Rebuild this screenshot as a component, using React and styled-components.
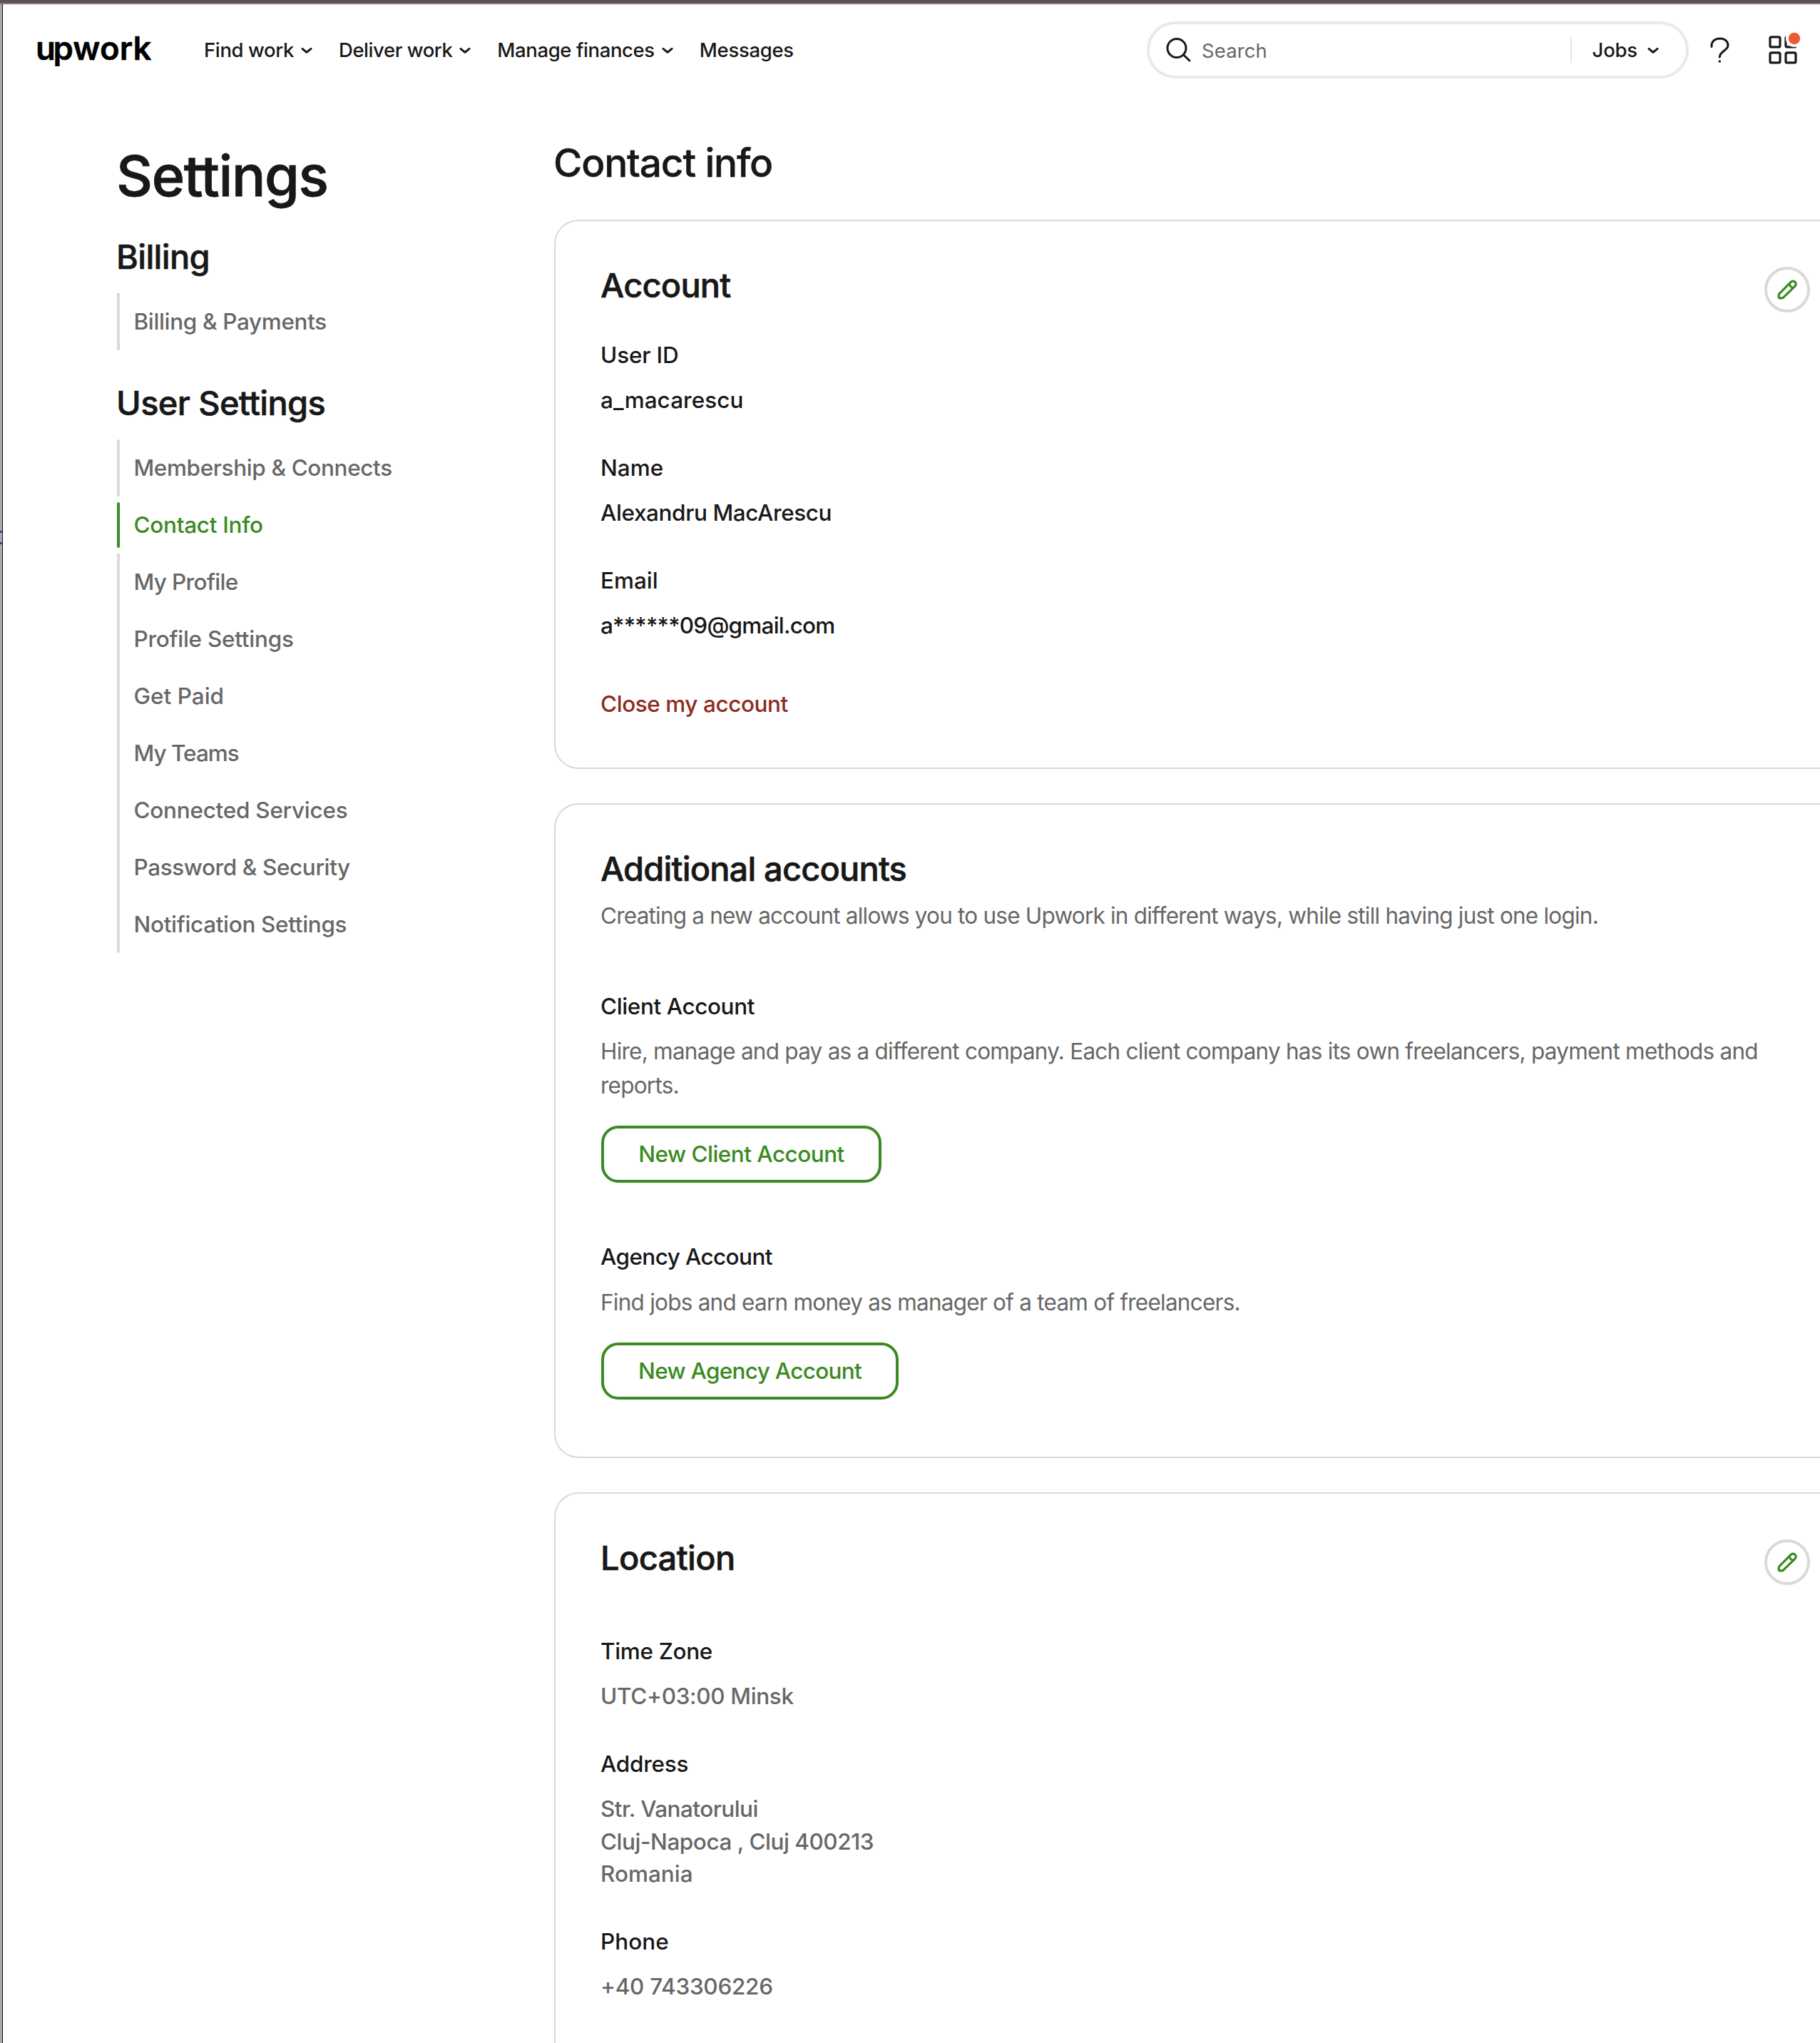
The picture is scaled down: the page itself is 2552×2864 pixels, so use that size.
import React from 'react';
import styled, { createGlobalStyle, css } from 'styled-components';

const ink = '#181818';
const muted = '#676767';
const green = '#3b8a22';
const line = '#d9d9d9';

const GlobalStyle = createGlobalStyle`
  *, *::before, *::after { box-sizing: border-box; }
  body { margin: 0; background: #fff; }
`;

/* ---------- Window frame ---------- */

const Window = styled.div`
  display: flex;
  flex-direction: column;
  height: 2864px;
  overflow: hidden;
  background: #fff;
  color: ${ink};
  font-family: Inter, 'Liberation Sans', sans-serif;
  font-weight: 500;
  font-size: 31.5px;
  -webkit-font-smoothing: antialiased;
`;

const WindowTop = styled.div`
  flex: none;
  height: 6px;
  background: #5e505a;
  border-bottom: 2px solid #84767f;
`;

const WindowBody = styled.div`
  flex: 1;
  display: flex;
  min-height: 0;
`;

const WindowEdge = styled.div`
  flex: none;
  width: 4px;
  padding-top: 738px;
  background: #a9a9a9;
  border-right: 1px solid #0c0c0c;
`;

const EdgeMark = styled.div`
  height: 3px;
  margin-bottom: 13px;
  background: #3f3fa3;
`;

const Page = styled.div`
  flex: 1;
  min-width: 0;
  overflow: hidden;
`;

/* ---------- Top navigation ---------- */

const Header = styled.header`
  display: flex;
  align-items: center;
  height: 128px;
  padding: 0 20px 0 46px;
`;

const Logo = styled.div`
  width: 236px;
  color: #000;
  font-size: 45.5px;
  font-weight: 600;
  line-height: 60px;
  letter-spacing: 0.1px;
  padding-bottom: 5px;
  -webkit-text-stroke: 0.5px #000;
`;

const LogoJoin = styled.span`
  letter-spacing: -3.4px;
`;

const Nav = styled.nav`
  display: flex;
  align-items: center;
  gap: 37px;
`;

const NavItem = styled.a`
  display: flex;
  align-items: center;
  gap: 10px;
  font-size: 27.5px;
  line-height: 40px;
  white-space: nowrap;
  letter-spacing: ${(p) => p.$track}px;
`;

const Search = styled.div`
  display: flex;
  align-items: center;
  width: 760px;
  height: 80px;
  margin-left: auto;
  padding: 0 38px 0 22px;
  border: 4px solid #e9e9e9;
  border-radius: 40px;
`;

const SearchLabel = styled.span`
  flex: 1;
  padding: 1px 0 0 11px;
  font-size: 27.5px;
  font-weight: 400;
  line-height: 40px;
  letter-spacing: 0.1px;
  color: ${muted};
`;

const SearchScope = styled.div`
  display: flex;
  align-items: center;
  gap: 14px;
  height: 36px;
  padding-left: 29px;
  border-left: 2px solid #e4e4e4;
  font-size: 27.5px;
  letter-spacing: -0.2px;
`;

const HeaderIcon = styled.svg`
  flex: none;
  margin-left: ${(p) => p.$gap}px;
`;

const Chevron = () => (
  <svg width="16" height="16" viewBox="0 0 16 16" fill="none">
    <path d="M2 6.3 8 11.300l6-5" stroke={ink} strokeWidth="3" strokeLinecap="round" strokeLinejoin="round" />
  </svg>
);

const SearchIcon = () => (
  <svg width="40" height="40" viewBox="0 0 40 40" fill="none" stroke={ink} strokeWidth="3" strokeLinecap="round">
    <circle cx="16" cy="17.5" r="13" />
    <path d="M25.6 27 34 35" />
  </svg>
);

const HelpIcon = () => (
  <HeaderIcon $gap={28} width="32" height="48" viewBox="0 0 32 48" fill="none">
    <path
      d="M4 19.5v-1.3C4 11.8 9 8 15.8 8 22.5 8 27 11.800 27 17.300 27 25.500 15.500 25 15.300 34"
      stroke={ink}
      strokeWidth="3"
      strokeLinecap="round"
    />
    <circle cx="15.300" cy="40" r="1.800" fill={ink} />
  </HeaderIcon>
);

const AppsIcon = () => (
  <HeaderIcon $gap={48} width="56" height="56" viewBox="0 0 56 56" fill="none">
    <g stroke={ink} strokeWidth="3.2">
      <rect x="6" y="9.900" width="14" height="14" rx="2" />
      <rect x="28" y="9.900" width="14" height="14" rx="2" />
      <rect x="6" y="31.900" width="14" height="14" rx="2" />
      <rect x="28" y="31.900" width="14" height="14" rx="2" />
    </g>
    <circle cx="40" cy="12" r="12" fill="#fff" />
    <circle cx="40" cy="12" r="8.200" fill="#ee5a36" />
  </HeaderIcon>
);

/* ---------- Settings sidebar ---------- */

const Main = styled.main`
  display: flex;
  align-items: flex-start;
`;

const Sidebar = styled.aside`
  flex: none;
  width: 773px;
  padding: 64px 0 0 160px;
`;

const PageTitle = styled.h1`
  margin: 0 0 0 -1px;
  font-size: 79px;
  font-weight: 500;
  line-height: 96px;
  letter-spacing: -1.4px;
  -webkit-text-stroke: 0.8px ${ink};
`;

const MenuTitle = styled.h2`
  margin: ${(p) => p.$top}px 0 21px -1px;
  font-size: 47px;
  font-weight: 500;
  line-height: 60px;
  letter-spacing: -0.65px;
  -webkit-text-stroke: 0.6px ${ink};
`;

const Menu = styled.ul`
  margin: 0;
  padding: 0;
  list-style: none;
`;

const MenuItem = styled.li`
  display: flex;
  align-items: center;
  height: 80px;
  line-height: 46px;
  color: ${(p) => (p.$active ? green : muted)};
  letter-spacing: ${(p) => p.$track}px;

  &::before {
    content: '';
    width: 4px;
    height: ${(p) => (p.$active ? 64 : 80)}px;
    margin-right: 19.5px;
    background: ${(p) => (p.$active ? green : line)};
    border-radius: ${(p) => (p.$active ? '2px' : '0')};
  }
  &:first-child::before { border-radius: 2px 2px 0 0; }
  &:last-child::before { border-radius: 0 0 2px 2px; }
`;

/* ---------- Content cards ---------- */

const Content = styled.section`
  flex: 1;
  min-width: 0;
  padding-top: 58px;
`;

const SectionTitle = styled.h2`
  margin: 0 0 44px -1px;
  font-size: 55px;
  font-weight: 500;
  line-height: 72px;
  letter-spacing: -1.2px;
  -webkit-text-stroke: 0.4px ${ink};
`;

const Card = styled.article`
  height: ${(p) => p.$height}px;
  margin-bottom: 48px;
  padding: 60px 14px 0 63px;
  border: 2px solid ${line};
  border-right: none;
  border-radius: 34px 0 0 34px;
  ${(p) =>
    p.$open &&
    css`
      margin-bottom: 0;
      border-bottom: none;
      border-radius: 34px 0 0 0;
    `}
`;

const CardHead = styled.div`
  display: flex;
  justify-content: space-between;
  align-items: flex-start;
`;

const CardTitle = styled.h3`
  margin: 0;
  font-size: 47px;
  font-weight: 500;
  line-height: 60px;
  letter-spacing: ${(p) => p.$track}px;
  -webkit-text-stroke: 0.6px ${ink};
`;

const EditButton = styled.button`
  display: grid;
  place-items: center;
  width: 64px;
  height: 64px;
  margin-top: 4px;
  padding: 0;
  border: 4px solid ${line};
  border-radius: 50%;
  background: #fff;
`;

const FieldList = styled.dl`
  display: flex;
  flex-direction: column;
  gap: 49px;
  margin: ${(p) => p.$top}px 0 0;
`;

const Label = styled.dt`
  line-height: 46px;
  letter-spacing: ${(p) => p.$track}px;
`;

const Value = styled.dd`
  margin: ${(p) => (p.$first ? 17.3 : 0)}px 0 0;
  line-height: 45.5px;
  color: ${(p) => (p.$muted ? muted : ink)};
  letter-spacing: ${(p) => p.$track}px;
`;

const CloseLink = styled.a`
  display: block;
  margin-top: 65px;
  line-height: 46px;
  letter-spacing: -0.44px;
  color: #8f2b20;
`;

const Text = styled.p`
  margin: ${(p) => p.$top}px 0 0;
  max-width: 1640px;
  font-weight: 400;
  line-height: 48px;
  letter-spacing: ${(p) => p.$track}px;
  color: ${muted};
`;

const SubTitle = styled.h4`
  margin: ${(p) => p.$top}px 0 0;
  font-size: 31.5px;
  font-weight: 500;
  line-height: 46px;
  letter-spacing: ${(p) => p.$track}px;
`;

const OutlineButton = styled.button`
  display: block;
  width: ${(p) => p.$width}px;
  height: 80px;
  margin: 32px 0 0 1px;
  padding: 0 0 2px;
  border: 4px solid ${green};
  border-radius: 24px;
  background: #fff;
  color: ${green};
  font: inherit;
  letter-spacing: ${(p) => p.$track}px;
`;

const Edit = () => (
  <EditButton aria-label="Edit">
    <svg width="28" height="28" viewBox="0 0 28 28" fill="none" stroke={green} strokeWidth="3.2" strokeLinejoin="round">
      <path d="M2.200 24.300v-2.200c0-1.100.4-2 1.100-2.700L19.200 3.400a4.100 4.100 0 0 1 5.800 5.800L8.800 24.800c-.7.7-1.600 1.100-2.600 1.100H3.800c-1 0-1.600-.6-1.600-1.600z" />
      <path d="M17.200 5.400c0 3.200 2.400 5.700 5.800 5.800" />
    </svg>
  </EditButton>
);

/* ---------- Data ---------- */

const navItems = [
  { text: 'Find work', track: -0.38, menu: true },
  { text: 'Deliver work', track: -0.44, menu: true },
  { text: 'Manage finances', track: -0.4, menu: true },
  { text: 'Messages', track: -0.3 },
];

const userMenu = [
  { text: 'Membership & Connects', track: -0.38 },
  { text: 'Contact Info', track: -0.3 },
  { text: 'My Profile', track: -0.65 },
  { text: 'Profile Settings', track: -0.27 },
  { text: 'Get Paid', track: 0 },
  { text: 'My Teams', track: -1 },
  { text: 'Connected Services', track: -0.27 },
  { text: 'Password & Security', track: -0.4 },
  { text: 'Notification Settings', track: -0.33 },
];

const accountFields = [
  { label: 'User ID', track: -0.15, values: [['a_macarescu', 0.05]] },
  { label: 'Name', track: 0, values: [['Alexandru MacArescu', -0.4]] },
  { label: 'Email', track: 0, values: [['a******09@gmail.com', -0.78]] },
];

const locationFields = [
  { label: 'Time Zone', track: -0.35, values: [['UTC+03:00 Minsk', -0.35]] },
  {
    label: 'Address',
    track: -0.25,
    values: [
      ['Str. Vanatorului', -0.55],
      ['Cluj-Napoca , Cluj 400213', -0.48],
      ['Romania', 0],
    ],
  },
  { label: 'Phone', track: 0, values: [['+40 743306226', -0.3]] },
];

const Fields = ({ items, top, muted: isMuted }) => (
  <FieldList $top={top}>
    {items.map((f) => (
      <div key={f.label}>
        <Label $track={f.track}>{f.label}</Label>
        {f.values.map(([text, track], i) => (
          <Value key={text} $first={i === 0} $muted={isMuted} $track={track}>
            {text}
          </Value>
        ))}
      </div>
    ))}
  </FieldList>
);

export default function App() {
  const current = 'Contact Info';

  return (
    <Window>
      <GlobalStyle />
      <WindowTop />
      <WindowBody>
        <WindowEdge>
          <EdgeMark />
          <EdgeMark />
        </WindowEdge>
        <Page>
          <Header>
            <Logo>
              <LogoJoin>u</LogoJoin>pwork
            </Logo>
            <Nav>
              {navItems.map((n) => (
                <NavItem key={n.text} $track={n.track}>
                  {n.text}
                  {n.menu && <Chevron />}
                </NavItem>
              ))}
            </Nav>
            <Search>
              <SearchIcon />
              <SearchLabel>Search</SearchLabel>
              <SearchScope>
                Jobs
                <Chevron />
              </SearchScope>
            </Search>
            <HelpIcon />
            <AppsIcon />
          </Header>
          <Main>
            <Sidebar>
              <PageTitle>Settings</PageTitle>
              <MenuTitle $top={36}>Billing</MenuTitle>
              <Menu>
                <MenuItem $track={-0.35}>Billing &amp; Payments</MenuItem>
              </Menu>
              <MenuTitle $top={44}>User Settings</MenuTitle>
              <Menu>
                {userMenu.map((m) => (
                  <MenuItem key={m.text} $track={m.track} $active={m.text === current}>
                    {m.text}
                  </MenuItem>
                ))}
              </Menu>
            </Sidebar>
            <Content>
              <SectionTitle>Contact info</SectionTitle>
              <Card $height={770}>
                <CardHead>
                  <CardTitle $track={-0.8}>Account</CardTitle>
                  <Edit />
                </CardHead>
                <Fields items={accountFields} top={37} />
                <CloseLink>Close my account</CloseLink>
              </Card>
              <Card $height={918}>
                <CardTitle $track={-0.85}>Additional accounts</CardTitle>
                <Text $top={11.5} $track={-0.79}>
                  Creating a new account allows you to use Upwork in different ways, while still having just one login.
                </Text>
                <SubTitle $top={80} $track={-0.4}>Client Account</SubTitle>
                <Text $top={16.5} $track={-0.76}>
                  Hire, manage and pay as a different company. Each client company has its own freelancers, payment
                  methods and reports.
                </Text>
                <OutlineButton $width={393} $track={-0.52}>New Client Account</OutlineButton>
                <SubTitle $top={80.5} $track={-0.6}>Agency Account</SubTitle>
                <Text $top={17.5} $track={-0.76}>Find jobs and earn money as manager of a team of freelancers.</Text>
                <OutlineButton $width={417} $track={-0.7}>New Agency Account</OutlineButton>
              </Card>
              <Card $height={772} $open>
                <CardHead>
                  <CardTitle $track={-0.65}>Location</CardTitle>
                  <Edit />
                </CardHead>
                <Fields items={locationFields} top={70} muted />
              </Card>
            </Content>
          </Main>
        </Page>
      </WindowBody>
    </Window>
  );
}
